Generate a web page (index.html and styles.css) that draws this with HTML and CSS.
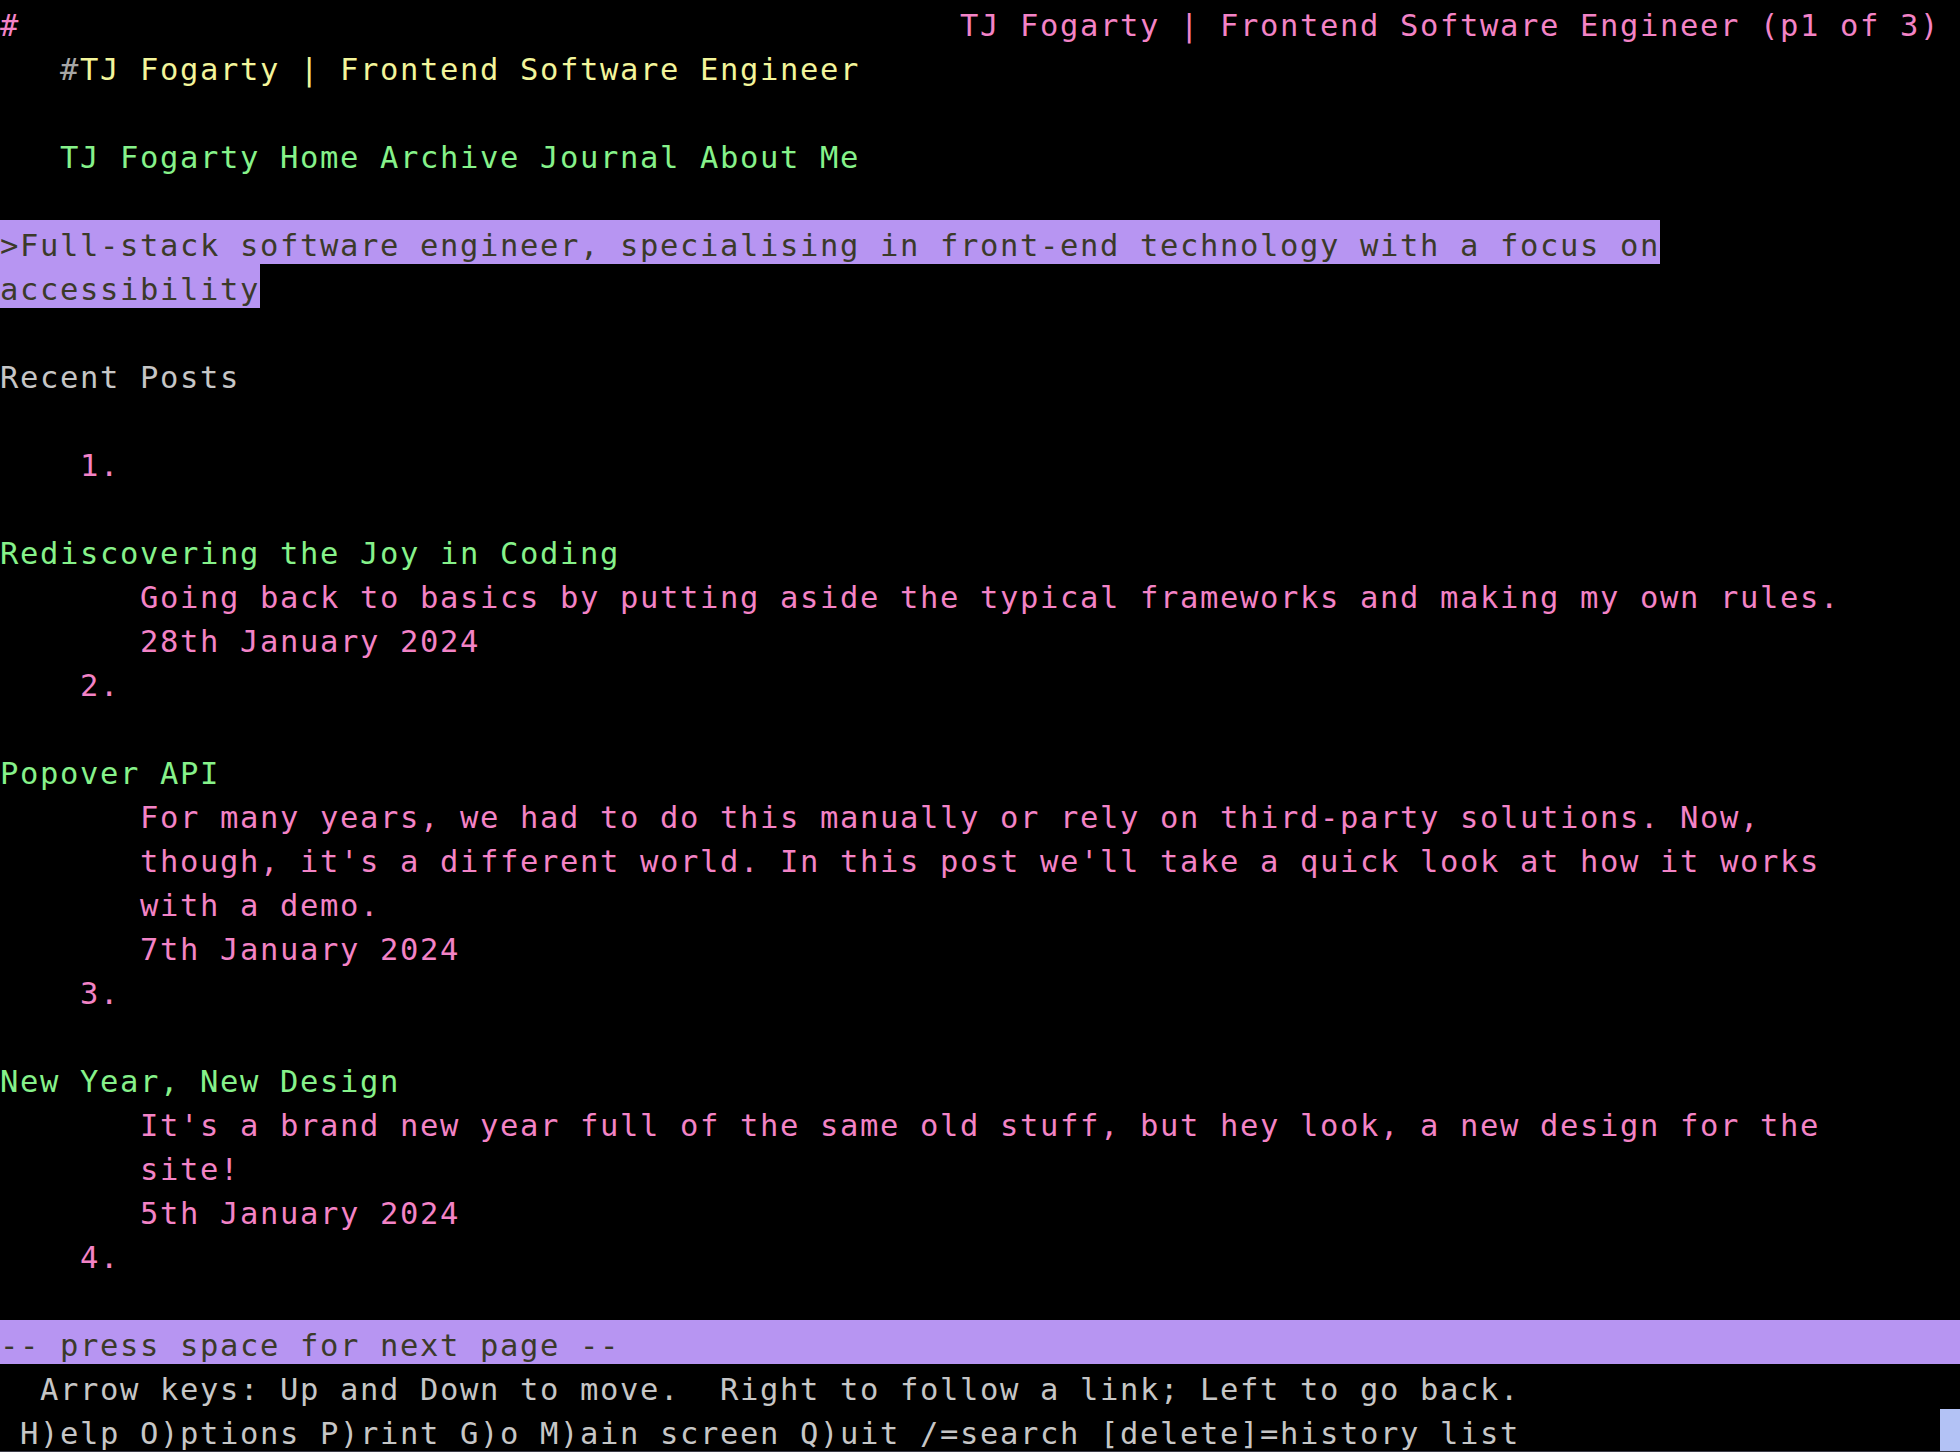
FILE: index.html
```html
<!DOCTYPE html>
<html lang="en">
<head>
<meta charset="utf-8">
<title>TJ Fogarty | Frontend Software Engineer</title>
<link rel="stylesheet" href="styles.css">
</head>
<body>
<div class="term">
  <div class="line status"><span class="pink">#</span><span class="pink">TJ Fogarty | Frontend Software Engineer (p1 of 3)</span></div>
  <div class="line">   <span class="dim">#</span><span class="yellow">TJ Fogarty | Frontend Software Engineer</span></div>
  <div class="line"></div>
  <div class="line green">   TJ Fogarty Home Archive Journal About Me</div>
  <div class="line"></div>
  <div class="line"><span class="hl">&gt;Full-stack software engineer, specialising in front-end technology with a focus on</span></div>
  <div class="line"><span class="hl">accessibility</span></div>
  <div class="line"></div>
  <div class="line gray">Recent Posts</div>
  <div class="line"></div>
  <div class="line pink">    1.</div>
  <div class="line"></div>
  <div class="line green">Rediscovering the Joy in Coding</div>
  <div class="line pink">       Going back to basics by putting aside the typical frameworks and making my own rules.</div>
  <div class="line pink">       28th January 2024</div>
  <div class="line pink">    2.</div>
  <div class="line"></div>
  <div class="line green">Popover API</div>
  <div class="line pink">       For many years, we had to do this manually or rely on third-party solutions. Now,</div>
  <div class="line pink">       though, it's a different world. In this post we'll take a quick look at how it works</div>
  <div class="line pink">       with a demo.</div>
  <div class="line pink">       7th January 2024</div>
  <div class="line pink">    3.</div>
  <div class="line"></div>
  <div class="line green">New Year, New Design</div>
  <div class="line pink">       It's a brand new year full of the same old stuff, but hey look, a new design for the</div>
  <div class="line pink">       site!</div>
  <div class="line pink">       5th January 2024</div>
  <div class="line pink">    4.</div>
  <div class="line"></div>
  <div class="line bar">-- press space for next page --</div>
  <div class="line gray">  Arrow keys: Up and Down to move.  Right to follow a link; Left to go back.</div>
  <div class="line gray last"> H)elp O)ptions P)rint G)o M)ain screen Q)uit /=search [delete]=history list<span class="cursor"></span></div>
</div>
</body>
</html>
```
FILE: styles.css
```css
html, body {
  margin: 0;
  padding: 0;
  background: #000;
}

body {
  width: 1960px;
  height: 1452px;
  overflow: hidden;
}

.term {
  font-family: "DejaVu Sans Mono", monospace;
  font-size: 30.5px;
  letter-spacing: 1.637px;
  color: #c6c6c6;
  display: flex;
  flex-direction: column;
  height: 1452px;
  box-sizing: border-box;
  border-bottom: 1px solid #3c3c48;
}

.line {
  height: 44px;
  line-height: 51px;
  white-space: pre;
  overflow: hidden;
  flex: none;
}

.status {
  display: flex;
  justify-content: space-between;
  padding-right: 20px;
}

.pink { color: #f383c6; }
.green { color: #86f28a; }
.yellow { color: #f3f59b; }
.gray { color: #c6c6c6; }
.dim { color: #a6a6a6; }

.hl {
  display: inline-block;
  height: 44px;
  background: #b795f2;
  color: #3b3a2a;
}

.bar {
  background: #b795f2;
  color: #3b3a2a;
}

.last {
  display: flex;
  justify-content: space-between;
  height: 43px;
}

.cursor {
  align-self: flex-end;
  width: 20px;
  height: 42px;
  background: #b3c2f5;
}
```
